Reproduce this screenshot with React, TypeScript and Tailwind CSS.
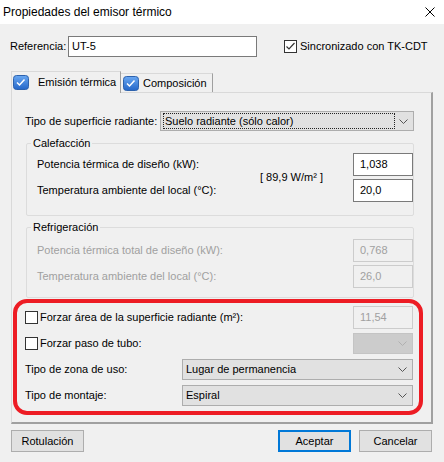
import React from "react";

function Chevron({ color = "#555555" }: { color?: string }) {
  return (
    <svg width="9" height="5" viewBox="0 0 9 5" className="shrink-0">
      <path d="M0.5 0.5 L4.5 4.5 L8.5 0.5" fill="none" stroke={color} strokeWidth="1" />
    </svg>
  );
}

function TabCheck() {
  return (
    <svg width="16" height="15" viewBox="0 0 16 15" className="shrink-0">
      <defs>
        <linearGradient id="tabg" x1="0" y1="0" x2="0" y2="1">
          <stop offset="0" stopColor="#6aa8f2" />
          <stop offset="1" stopColor="#2466c8" />
        </linearGradient>
      </defs>
      <rect x="0.5" y="0.5" width="15" height="14" rx="3" fill="url(#tabg)" stroke="#2d62ad" />
      <path d="M4 7.5 L6.5 10 L11.5 4.5" fill="none" stroke="#ffffff" strokeWidth="1.5" />
    </svg>
  );
}

function CheckBox({ checked }: { checked?: boolean }) {
  return (
    <div className="w-[13px] h-[13px] border border-[#333333] bg-white flex items-center justify-center shrink-0">
      {checked && (
        <svg width="11" height="11" viewBox="0 0 11 11">
          <path d="M1.5 5.5 L4 8 L9.5 2" fill="none" stroke="#333333" strokeWidth="1.2" />
        </svg>
      )}
    </div>
  );
}

function Box({ value, disabled }: { value: string; disabled?: boolean }) {
  return (
    <div
      className={`w-[60px] h-[23px] border pl-[6px] pt-[4px] leading-[13px] ${
        disabled ? "border-[#cccccc] text-[#a0a0a0] bg-[#f0f0f0]" : "border-[#7a7a7a] bg-white"
      }`}
    >
      {value}
    </div>
  );
}

function Select({ text, w }: { text: string; w: string }) {
  return (
    <div className={`${w} h-[21px] border border-[#adadad] bg-[#e1e1e1] flex items-center justify-between pl-[3px] pr-[5px]`}>
      <span>{text}</span>
      <Chevron />
    </div>
  );
}

function Btn({ label, primary }: { label: string; primary?: boolean }) {
  return (
    <div
      className={`w-[73px] h-[22px] flex items-center justify-center bg-[#e1e1e1] ${
        primary ? "border-2 border-[#0078d7]" : "border border-[#adadad]"
      }`}
    >
      {label}
    </div>
  );
}

export default function App() {
  return (
    <div className="w-[444px] h-[462px] bg-[#f0f0f0] flex flex-col overflow-hidden text-[11px] text-black font-['Liberation_Sans',Arial,sans-serif]">
      <div className="h-[24px] bg-white flex items-center justify-between pl-[3px] pr-[9px] shrink-0">
        <span className="text-[12px]">Propiedades del emisor térmico</span>
        <svg width="10" height="10" viewBox="0 0 10 10">
          <path d="M0.5 0.5 L9.5 9.5 M9.5 0.5 L0.5 9.5" stroke="#000" strokeWidth="1" />
        </svg>
      </div>

      <div className="mt-[12px] h-[21px] flex items-center pl-[10px] shrink-0">
        <span className="w-[58px]">Referencia:</span>
        <div className="w-[189px] h-[21px] border border-[#7a7a7a] bg-white pl-[3px] pt-[3px] leading-[13px]">UT-5</div>
        <div className="ml-[27px] flex items-center gap-[3px]">
          <CheckBox checked />
          <span>Sincronizado con TK-CDT</span>
        </div>
      </div>

      <div className="mt-[14px] h-[21px] flex items-end pl-[11px] shrink-0">
        <div className="relative z-10 -mb-px w-[110px] h-[22px] bg-[#f0f0f0] border-t border-l border-r border-t-[#d9d9d9] border-l-[#d9d9d9] border-r-[#a0a0a0] flex items-center pl-[1px]">
          <TabCheck />
          <span className="ml-[9px]">Emisión térmica</span>
        </div>
        <div className="w-[92px] h-[19px] border-t border-r border-t-[#d9d9d9] border-r-[#a0a0a0] flex items-center pl-[2px]">
          <TabCheck />
          <span className="ml-[4px]">Composición</span>
        </div>
      </div>

      <div className="ml-[11px] w-[422px] h-[332px] shrink-0 flex flex-col border-t border-l border-t-[#d9d9d9] border-l-[#d9d9d9] border-r-2 border-b-2 border-r-[#a0a0a0] border-b-[#a0a0a0]">
        <div className="mt-[18px] h-[20px] flex items-center pl-[13px]">
          <span className="w-[135px]">Tipo de superficie radiante:</span>
          <div className="w-[254px] h-[20px] border border-[#adadad] bg-[#e1e1e1] flex items-center justify-between pl-[2px] pr-[5px]">
            <span className="w-[232px] h-[16px] border border-dotted border-[#222] leading-[14px] pl-[1px]">Suelo radiante (sólo calor)</span>
            <Chevron />
          </div>
        </div>

        <fieldset className="ml-[14px] mt-[6px] w-[388px] h-[79px] border border-[#dcdcdc] rounded-[2px]">
          <legend className="ml-[4px] px-[2px] leading-[12px]">Calefacción</legend>
          <div className="flex pt-[4px] pl-[10px]">
            <div className="w-[223px] flex flex-col gap-[3px]">
              <div className="h-[23px] flex items-center">Potencia térmica de diseño (kW):</div>
              <div className="h-[23px] flex items-center">Temperatura ambiente del local (°C):</div>
            </div>
            <div className="w-[93px] self-center">[ 89,9 W/m² ]</div>
            <div className="flex flex-col gap-[3px]">
              <Box value="1,038" />
              <Box value="20,0" />
            </div>
          </div>
        </fieldset>

        <fieldset className="ml-[14px] mt-[5px] w-[388px] h-[77px] border border-[#dcdcdc] rounded-[2px]">
          <legend className="ml-[4px] px-[2px] leading-[12px]">Refrigeración</legend>
          <div className="flex pt-[6px] pl-[10px] text-[#a0a0a0]">
            <div className="w-[316px] flex flex-col gap-[3px]">
              <div className="h-[23px] flex items-center">Potencia térmica total de diseño (kW):</div>
              <div className="h-[23px] flex items-center">Temperatura ambiente del local (°C):</div>
            </div>
            <div className="flex flex-col gap-[3px]">
              <Box value="0,768" disabled />
              <Box value="26,0" disabled />
            </div>
          </div>
        </fieldset>

        <div className="ml-[1px] mt-[1px] w-[410px] h-[116px] border-[4px] border-[#ed1c24] rounded-[14px] flex flex-col pl-[8px] pr-[6px]">
          <div className="mt-[3px] h-[23px] flex items-center justify-between">
            <div className="flex items-center gap-[2px]">
              <CheckBox />
              <span>Forzar área de la superficie radiante (m²):</span>
            </div>
            <Box value="11,54" disabled />
          </div>
          <div className="mt-[4px] h-[21px] flex items-center justify-between">
            <div className="flex items-center gap-[2px]">
              <CheckBox />
              <span>Forzar paso de tubo:</span>
            </div>
            <div className="w-[60px] h-[21px] border border-[#c4c4c4] bg-[#cccccc] flex items-center justify-end pr-[5px]">
              <Chevron color="#b0b0b0" />
            </div>
          </div>
          <div className="mt-[5px] h-[21px] flex items-center justify-between">
            <span>Tipo de zona de uso:</span>
            <Select text="Lugar de permanencia" w="w-[231px]" />
          </div>
          <div className="mt-[5px] h-[21px] flex items-center justify-between">
            <span>Tipo de montaje:</span>
            <Select text="Espiral" w="w-[231px]" />
          </div>
        </div>
      </div>

      <div className="mt-[6px] h-[22px] flex items-center pl-[11px] pr-[12px] shrink-0">
        <Btn label="Rotulación" />
        <div className="flex-1" />
        <Btn label="Aceptar" primary />
        <div className="ml-[8px]">
          <Btn label="Cancelar" />
        </div>
      </div>
    </div>
  );
}
